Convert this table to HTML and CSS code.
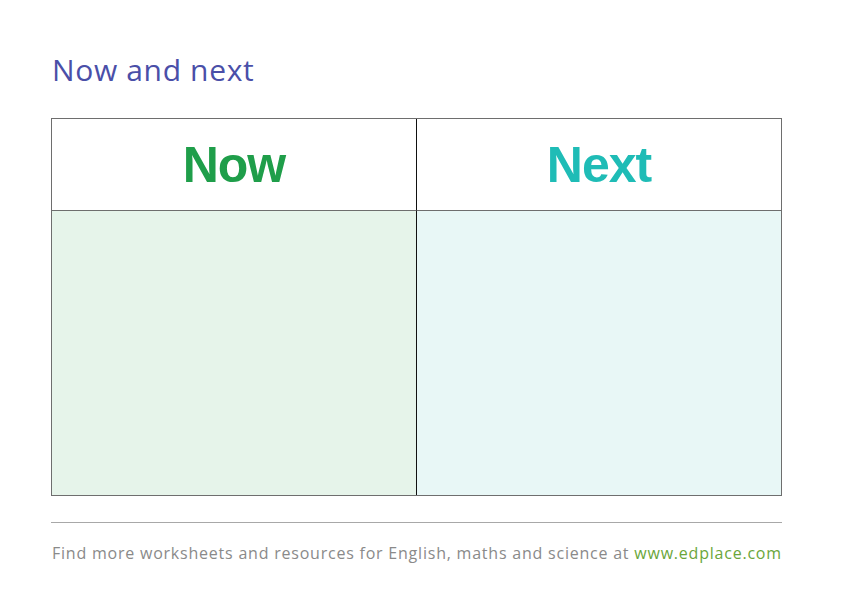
FILE: index.html
```html
<!DOCTYPE html>
<html>
<head>
<meta charset="utf-8">
<link rel="stylesheet" href="styles.css">
</head>
<body>
<div class="page">
  <h1 class="title">Now and next</h1>
  <div class="table">
    <div class="head now">Now</div>
    <div class="head next">Next</div>
    <div class="cell cell-now"></div>
    <div class="cell cell-next"></div>
  </div>
  <div class="rule"></div>
  <p class="footer">Find more worksheets and resources for English, maths and science at <span class="link">www.edplace.com</span></p>
</div>
</body>
</html>
```
FILE: styles.css
```css
html, body {
  margin: 0;
  padding: 0;
  background: #fff;
}
.page {
  width: 842px;
  height: 595px;
  padding: 50px 60px 0 51px;
  box-sizing: border-box;
}
.title {
  margin: 0 0 0 1px;
  font-family: "Open Sans", sans-serif;
  font-weight: 400;
  font-size: 30px;
  letter-spacing: 0.65px;
  line-height: 40px;
  color: #4a4fa8;
}
.table {
  margin-top: 28px;
  display: grid;
  grid-template-columns: 365px 364px;
  grid-template-rows: 92px 284px;
  border: 1px solid #6e6e6e;
  width: 731px;
  box-sizing: border-box;
}
.head {
  display: flex;
  align-items: center;
  justify-content: center;
  font-family: "Liberation Sans", sans-serif;
  font-weight: 700;
  font-size: 50px;
  letter-spacing: -1px;
  border-bottom: 1px solid #6e6e6e;
}
.head.now {
  color: #1f9e4a;
  border-right: 1px solid #111;
}
.head.next {
  color: #1fbcb6;
}
.cell-now {
  background: #e6f4ea;
  border-right: 1px solid #111;
}
.cell-next {
  background: #e8f7f6;
}
.rule {
  margin-top: 26px;
  width: 731px;
  height: 1px;
  background: #a8a8a8;
}
.footer {
  margin: 19px 0 0 1px;
  font-family: "Open Sans", sans-serif;
  font-size: 16px;
  letter-spacing: 0.78px;
  line-height: 22px;
  color: #8a8a8a;
  white-space: nowrap;
}
.link {
  color: #6aa63a;
}
```
